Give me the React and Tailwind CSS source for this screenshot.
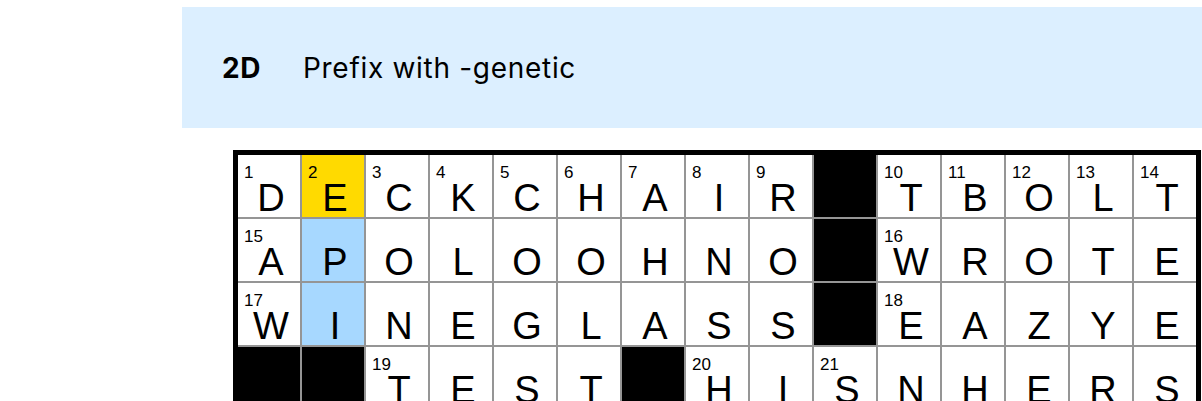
import React from "react";

const rows = [
  "DECKCHAIR#TBOLT",
  "APOLOOHNO#WROTE",
  "WINEGLASS#EAZYE",
  "##TEST#HISNHERS",
];

const numbers = {
  "0-0": 1, "0-1": 2, "0-2": 3, "0-3": 4, "0-4": 5, "0-5": 6, "0-6": 7, "0-7": 8, "0-8": 9,
  "0-10": 10, "0-11": 11, "0-12": 12, "0-13": 13, "0-14": 14,
  "1-0": 15, "1-10": 16,
  "2-0": 17, "2-10": 18,
  "3-2": 19, "3-7": 20, "3-9": 21,
};

const Cell = ({ r, c, letter }) => {
  if (letter === "#") return <div className="h-[62px] bg-black" />;

  const num = numbers[`${r}-${c}`];
  let bg = "bg-white";
  if (r === 0 && c === 1) bg = "bg-[#ffda00]";
  else if (c === 1) bg = "bg-[#a7d8ff]";

  return (
    <div className={`relative flex h-[62px] items-end justify-center pl-[4px] ${bg}`}>
      {num && (
        <span className="absolute left-[6px] top-[9px] text-[17px] leading-none text-black">
          {num}
        </span>
      )}
      <span className="text-[38px] leading-none text-black">{letter}</span>
    </div>
  );
};

export default function App() {
  return (
    <div className="h-[401px] w-[1202px] overflow-hidden bg-white pl-[182px] pt-[7px] font-['Liberation_Sans',Arial,sans-serif]">
      <div className="flex h-[121px] w-[1020px] items-center bg-[#dcefff] pl-[40px] font-['Inter',sans-serif] text-black">
        <span className="w-[81px] text-[28px] font-bold leading-none tracking-[0.5px]">2D</span>
        <span className="text-[28px] leading-none tracking-[0.7px]">Prefix with -genetic</span>
      </div>

      <div className="ml-[51px] mt-[22px] grid w-fit grid-cols-[repeat(15,62px)] gap-[2px] border-[5px] border-black bg-[#959595]">
        {rows.map((row, r) =>
          row.split("").map((letter, c) => (
            <Cell key={`${r}-${c}`} r={r} c={c} letter={letter} />
          )),
        )}
      </div>
    </div>
  );
}
